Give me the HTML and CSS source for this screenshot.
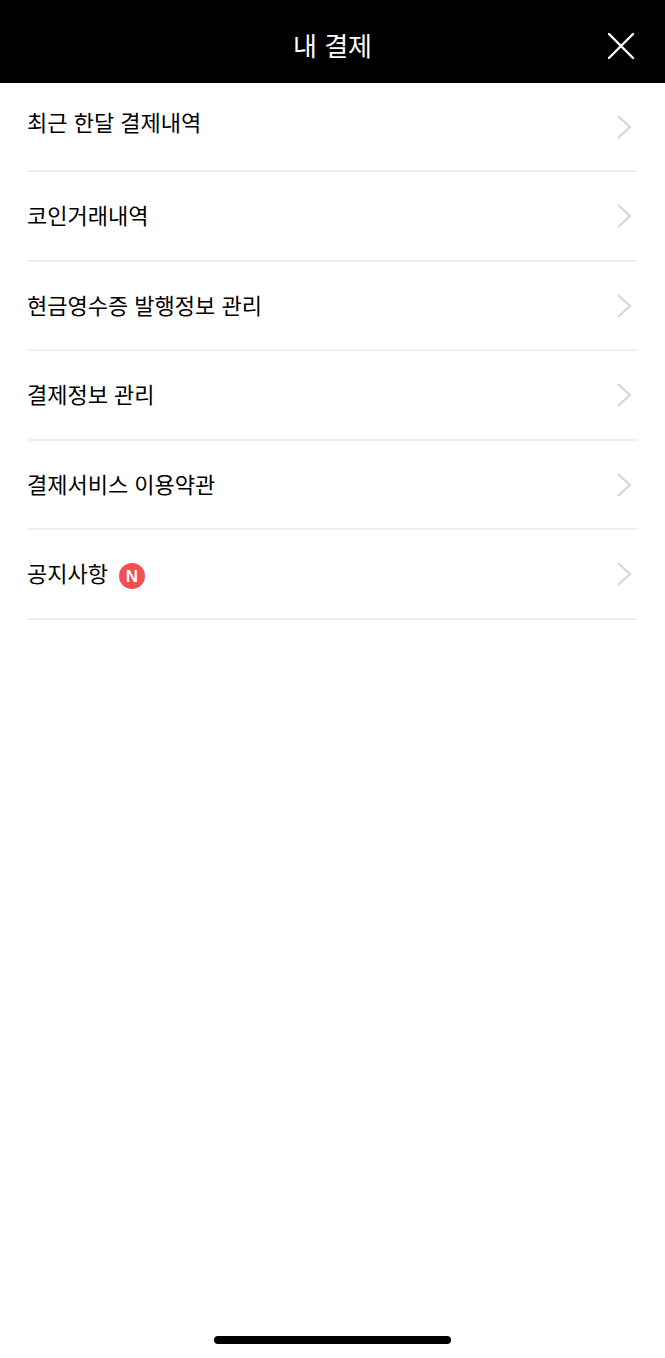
FILE: index.html
```html
<!DOCTYPE html>
<html lang="ko">
<head>
  <meta charset="UTF-8">
  <meta name="viewport" content="width=device-width, initial-scale=1.0">
  <title>내 결제</title>
  <link rel="stylesheet" href="styles.css">
</head>
<body>
  <header class="header">
    <h1>내 결제</h1>
    <button class="close" type="button" aria-label="닫기">
      <svg width="28" height="28" viewBox="0 0 28 28"><path d="M2 2L26 26M26 2L2 26"/></svg>
    </button>
  </header>

  <main>
    <ul class="menu">
      <li><a href="#">
        <span class="label">최근 한달 결제내역</span>
        <svg class="arrow" width="16" height="26" viewBox="0 0 16 26"><path d="M2 2L14 13L2 24"/></svg>
      </a></li>
      <li><a href="#">
        <span class="label">코인거래내역</span>
        <svg class="arrow" width="16" height="26" viewBox="0 0 16 26"><path d="M2 2L14 13L2 24"/></svg>
      </a></li>
      <li><a href="#">
        <span class="label">현금영수증 발행정보 관리</span>
        <svg class="arrow" width="16" height="26" viewBox="0 0 16 26"><path d="M2 2L14 13L2 24"/></svg>
      </a></li>
      <li><a href="#">
        <span class="label">결제정보 관리</span>
        <svg class="arrow" width="16" height="26" viewBox="0 0 16 26"><path d="M2 2L14 13L2 24"/></svg>
      </a></li>
      <li><a href="#">
        <span class="label">결제서비스 이용약관</span>
        <svg class="arrow" width="16" height="26" viewBox="0 0 16 26"><path d="M2 2L14 13L2 24"/></svg>
      </a></li>
      <li><a href="#">
        <span class="label">공지사항</span>
        <span class="badge">N</span>
        <svg class="arrow" width="16" height="26" viewBox="0 0 16 26"><path d="M2 2L14 13L2 24"/></svg>
      </a></li>
    </ul>
  </main>

  <div class="home-bar"></div>
</body>
</html>
```

FILE: styles.css
```css
* {
  box-sizing: border-box;
}
body {
  margin: 0;
  min-height: 100vh;
  display: flex;
  flex-direction: column;
  background: #fff;
  color: #000;
  font-family: "Noto Sans CJK KR", sans-serif;
}
.header {
  display: grid;
  grid-template-columns: 1fr auto 1fr;
  align-items: center;
  height: 83px;
  padding: 8px 30px 0;
  background: #000;
  color: #fff;
}
.header h1 {
  grid-column: 2;
  margin: 0;
  padding-bottom: 2px;
  font-size: 26px;
  line-height: 40px;
  font-weight: 400;
}
.close {
  justify-self: end;
  display: flex;
  padding: 0;
  border: none;
  background: none;
  cursor: pointer;
}
.close path {
  fill: none;
  stroke: #fff;
  stroke-width: 2.4;
  stroke-linecap: round;
}
main {
  flex: 1;
}
.menu {
  margin: 0;
  padding: 0 27px;
  list-style: none;
}
.menu li {
  border-bottom: 2px solid #f0f0f0;
}
.menu a {
  display: flex;
  align-items: center;
  height: 87px;
  padding-right: 6px;
  color: inherit;
  text-decoration: none;
}
/* every other row is a pixel taller */
.menu li:nth-child(odd) + li a {
  height: 88px;
}
.label {
  padding-bottom: 4px;
  font-size: 22px;
  line-height: 34px;
}
.menu li:first-child .label {
  padding-bottom: 12px;
}
.badge {
  width: 26px;
  height: 26px;
  margin: 4px 0 0 11px;
  border-radius: 50%;
  background: #f44e50;
  color: #fff;
  font: bold 17px/27px "Liberation Sans", sans-serif;
  text-align: center;
}
.arrow {
  margin-left: auto;
  fill: none;
  stroke: #d4d4d4;
  stroke-width: 2;
}
.home-bar {
  width: 36%;
  max-width: 237px;
  height: 8px;
  margin: 0 auto 14px;
  border-radius: 4px;
  background: #000;
}
```
